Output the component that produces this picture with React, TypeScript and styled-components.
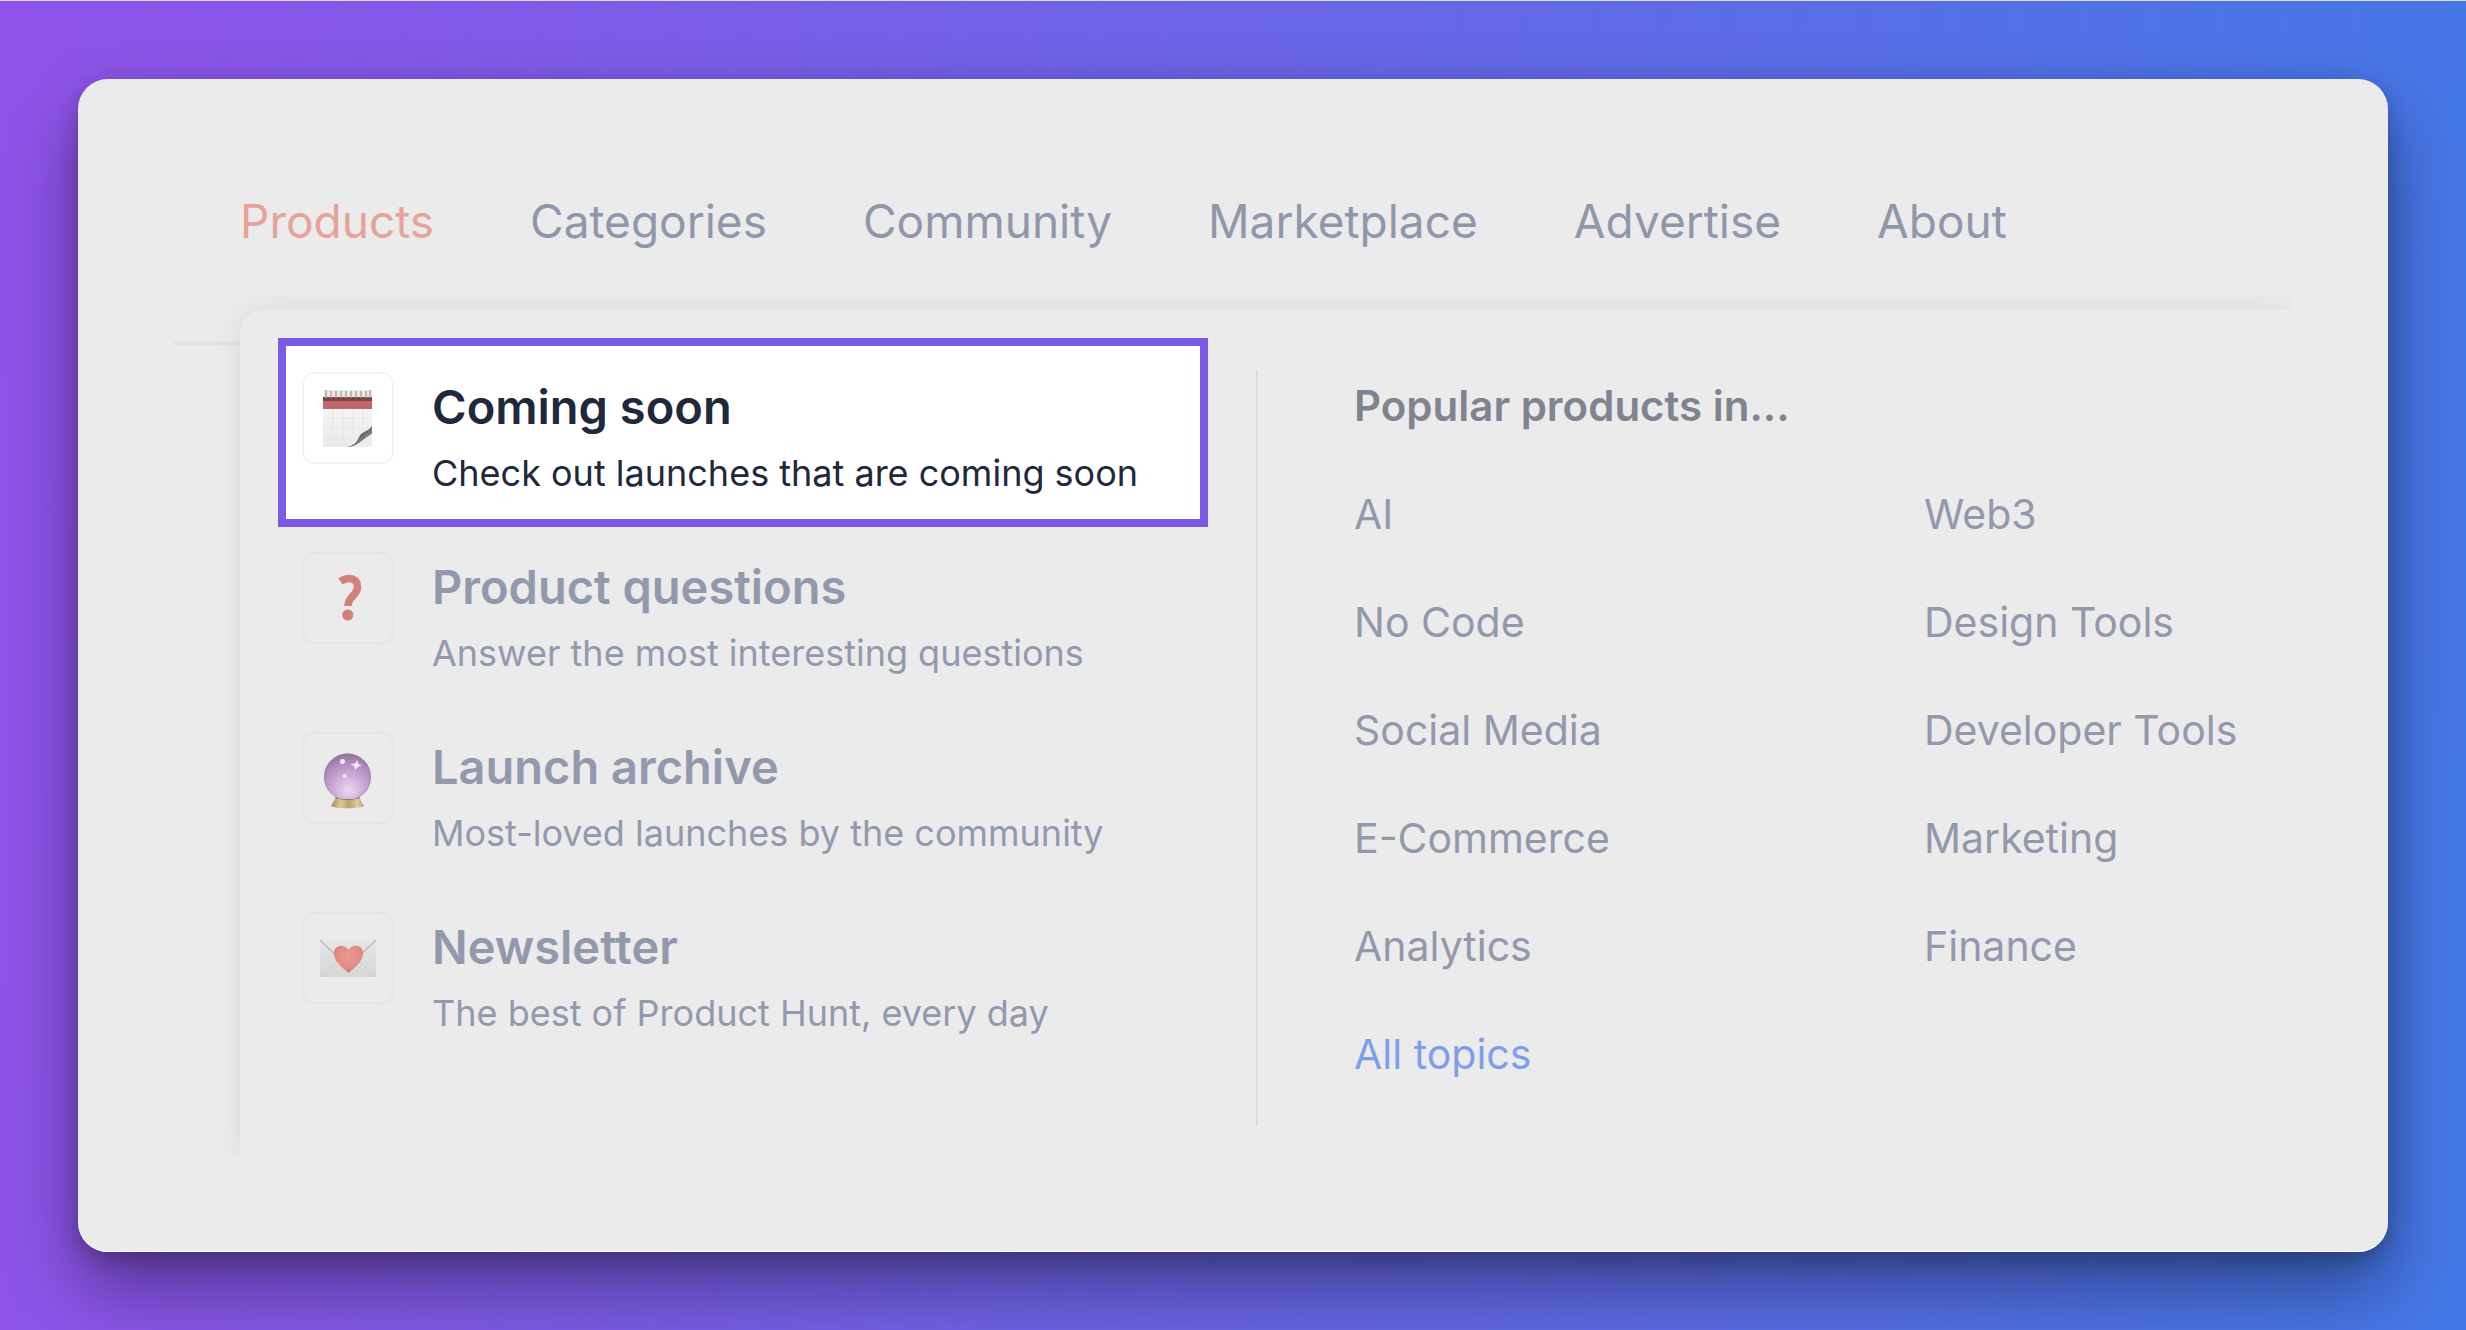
import React from "react";
import styled, { createGlobalStyle } from "styled-components";

const GlobalStyle = createGlobalStyle`
  *, *::before, *::after { box-sizing: border-box; }
  body {
    margin: 0;
    font-family: Inter, "Liberation Sans", sans-serif;
    -webkit-font-smoothing: antialiased;
  }
  a { color: inherit; text-decoration: none; }
  ul { list-style: none; margin: 0; padding: 0; }
`;

const Backdrop = styled.div`
  display: flex;
  min-height: 100vh;
  padding: 78px;
  border-top: 1px solid #dcdcee;
  background: linear-gradient(93deg, #9053e9, #4478e6);
`;

const Card = styled.main`
  flex: 1;
  padding: 96px;
  background: #ebebeb;
  border-radius: 30px;
  box-shadow:
    inset 0 -1px 0 #ffffff,
    0 36px 72px rgba(0, 0, 0, 0.4),
    0 8px 20px rgba(0, 0, 0, 0.2);
`;

const Viewport = styled.div`
  overflow: hidden;
`;

const Header = styled.header`
  height: 170px;
  padding: 10px 66px 0;
  border-bottom: 4px solid #e3e3e3;
`;

const NavList = styled.ul`
  display: flex;
  gap: 96px;
`;

const NavLink = styled.a<{ $active?: boolean }>`
  display: block;
  font-size: 46px;
  line-height: 72px;
  color: ${(p) => (p.$active ? "#e5a399" : "#9197ab")};
`;

const Dropdown = styled.section`
  display: grid;
  grid-template-columns: minmax(0, 1016fr) minmax(0, 1036fr);
  margin: -35px 0 0 66px;
  padding-bottom: 30px;
  background: #ebebeb;
  border-top-left-radius: 24px;
  box-shadow: 0 0 30px rgba(0, 0, 0, 0.07);
`;

const FeatureList = styled.ul`
  display: flex;
  flex-direction: column;
  gap: 7px;
  padding: 36px 56px 0 46px;
`;

const Feature = styled.a<{ $highlighted?: boolean }>`
  display: flex;
  gap: 38px;
  height: 173px;
  padding: 26px 16px 0;
  color: ${(p) => (p.$highlighted ? "#21283c" : "#9399ac")};
  background: ${(p) => (p.$highlighted ? "#ffffff" : "transparent")};
  outline: ${(p) => (p.$highlighted ? "8px solid #7b5ae6" : "none")};
`;

const Tile = styled.span<{ $highlighted?: boolean }>`
  display: flex;
  align-items: center;
  justify-content: center;
  flex: none;
  width: 92px;
  height: 92px;
  border: 2px solid ${(p) => (p.$highlighted ? "#f4f3fd" : "#e5e4ec")};
  border-radius: 12px;
`;

const FeatureText = styled.span`
  display: flex;
  flex-direction: column;
  gap: 12px;
  padding-top: 5px;
  white-space: nowrap;
`;

const FeatureTitle = styled.span`
  font-size: 47px;
  font-weight: 600;
  line-height: 60px;
`;

const FeatureNote = styled.span`
  font-size: 36px;
  line-height: 48px;
`;

const Popular = styled.div`
  margin-top: 60px;
  padding-left: 96px;
  border-left: 2px solid #dcdbe4;
`;

const PopularTitle = styled.h2`
  margin: 0 0 36px;
  font-size: 42px;
  font-weight: 600;
  line-height: 72px;
  color: #80848f;
`;

const TopicGrid = styled.ul`
  display: grid;
  grid-template-columns: 570fr 368fr;
  row-gap: 36px;
  padding-bottom: 36px;
`;

const Topic = styled.a<{ $accent?: boolean }>`
  display: block;
  font-size: 41px;
  line-height: 72px;
  white-space: nowrap;
  color: ${(p) => (p.$accent ? "#7f9eea" : "#9398ab")};
`;

const CalendarIcon = () => (
  <svg width="88" height="88" viewBox="2 2 88 88" aria-hidden="true">
    <defs>
      <linearGradient id="paper" x1="0" y1="0" x2="0" y2="1">
        <stop offset="0" stopColor="#f6f5f5" />
        <stop offset="1" stopColor="#eaeaea" />
      </linearGradient>
      <linearGradient id="curl" x1="0" y1="0" x2="1" y2="1">
        <stop offset="0" stopColor="#c9c9c9" />
        <stop offset="0.45" stopColor="#5d5d5d" />
        <stop offset="1" stopColor="#c4c4c4" />
      </linearGradient>
    </defs>
    <rect x="22" y="18" width="48" height="8" fill="#ece8e8" />
    <path d="M21 36H70V55L55 68L45 75H21Z" fill="url(#paper)" />
    <path d="M21 46H69M21 56H68M21 66H56M31 38V75M41 38V75M51 38V68M61 38V62" stroke="#e6e6e6" strokeWidth="1" />
    <rect x="21" y="26" width="49" height="11" fill="#c0676b" />
    <rect x="21" y="25" width="49" height="4" fill="#7c4447" />
    <path d="M24 18V26M29 19V26M34 19V26M39 19V26M44 19V26M49 19V26M54 19V26M59 19V26M64 19V26M68 18V26" stroke="#a8a2a2" strokeWidth="1.4" />
    <path d="M45 75C52 73 55 70 57 65C60 59 66 60 70 54V62C62 66 58 73 48 75Z" fill="url(#curl)" />
    <path d="M48 75C58 73 62 66 70 62V75Z" fill="#ededed" />
  </svg>
);

const QuestionIcon = () => (
  <svg width="88" height="88" viewBox="2 2 88 88" aria-hidden="true">
    <path
      d="M38.500 29.500C47 23.500 56 27 55.500 35.500C55 44 46 44 46 54"
      fill="none"
      stroke="#d28079"
      strokeWidth="7.5"
    />
    <circle cx="45.800" cy="63" r="5.600" fill="#d28079" />
  </svg>
);

const CrystalBallIcon = () => (
  <svg width="88" height="88" viewBox="2 2 88 88" aria-hidden="true">
    <defs>
      <radialGradient id="ball" cx="0.52" cy="0.78" r="0.85">
        <stop offset="0" stopColor="#ead9f0" />
        <stop offset="0.35" stopColor="#cfaedb" />
        <stop offset="0.7" stopColor="#b08abc" />
        <stop offset="1" stopColor="#806c88" />
      </radialGradient>
      <linearGradient id="stand" x1="0" y1="0" x2="1" y2="0">
        <stop offset="0" stopColor="#a58f62" />
        <stop offset="0.3" stopColor="#dcc990" />
        <stop offset="0.55" stopColor="#b8a172" />
        <stop offset="0.8" stopColor="#dfd19c" />
        <stop offset="1" stopColor="#b39f74" />
      </linearGradient>
    </defs>
    <path d="M34 65H57L62 74C58 77 33 77 29 74Z" fill="url(#stand)" />
    <circle cx="45.500" cy="45" r="23.500" fill="url(#ball)" />
    <circle cx="45.500" cy="45" r="23" fill="none" stroke="#8f7799" strokeOpacity="0.5" />
    <path d="M33 65C40 69 51 69 58 65L57 67H34Z" fill="#8e7868" />
    <circle cx="40.500" cy="29.500" r="2.500" fill="#f5ecf8" />
    <circle cx="42.500" cy="44" r="2" fill="#f0e4f4" />
    <path d="M55 28L56.500 32L60 33L56 35L53 38L52 34L48 32L53 31.500Z" fill="#f3e8f7" />
  </svg>
);

const LoveLetterIcon = () => (
  <svg width="88" height="88" viewBox="2 2 88 88" aria-hidden="true">
    <defs>
      <linearGradient id="envelope" x1="0" y1="0" x2="0" y2="1">
        <stop offset="0" stopColor="#e6e6e6" />
        <stop offset="1" stopColor="#d7d7d7" />
      </linearGradient>
      <radialGradient id="heart" cx="0.5" cy="0.4" r="0.65">
        <stop offset="0" stopColor="#eb9a95" />
        <stop offset="0.65" stopColor="#e48a84" />
        <stop offset="1" stopColor="#c46f69" />
      </radialGradient>
    </defs>
    <rect x="18" y="28" width="56" height="37" fill="url(#envelope)" />
    <path d="M18 65L38 47M74 65L54 47" stroke="#cdcdcd" strokeWidth="1" />
    <path d="M18 28L46 55L74 28" fill="none" stroke="#bcbcbc" strokeWidth="1.5" />
    <path
      d="M46.500 61C41 56 32 50 32 41.500C32 33 42 31 46.500 38C51 31 61 33 61 41.500C61 50 52 56 46.500 61Z"
      fill="url(#heart)"
    />
  </svg>
);

const navItems = ["Products", "Categories", "Community", "Marketplace", "Advertise", "About"];

const features = [
  { title: "Coming soon", note: "Check out launches that are coming soon", icon: <CalendarIcon />, highlighted: true },
  { title: "Product questions", note: "Answer the most interesting questions", icon: <QuestionIcon /> },
  { title: "Launch archive", note: "Most-loved launches by the community", icon: <CrystalBallIcon /> },
  { title: "Newsletter", note: "The best of Product Hunt, every day", icon: <LoveLetterIcon /> },
];

const topics = [
  "AI",
  "Web3",
  "No Code",
  "Design Tools",
  "Social Media",
  "Developer Tools",
  "E-Commerce",
  "Marketing",
  "Analytics",
  "Finance",
  "All topics",
];

export default function App() {
  return (
    <>
      <GlobalStyle />
      <Backdrop>
        <Card>
          <Viewport>
            <Header>
              <nav>
                <NavList>
                  {navItems.map((label) => (
                    <li key={label}>
                      <NavLink href="#" $active={label === "Products"}>
                        {label}
                      </NavLink>
                    </li>
                  ))}
                </NavList>
              </nav>
            </Header>
            <Dropdown>
              <FeatureList>
                {features.map((f) => (
                  <li key={f.title}>
                    <Feature href="#" $highlighted={f.highlighted}>
                      <Tile $highlighted={f.highlighted}>{f.icon}</Tile>
                      <FeatureText>
                        <FeatureTitle>{f.title}</FeatureTitle>
                        <FeatureNote>{f.note}</FeatureNote>
                      </FeatureText>
                    </Feature>
                  </li>
                ))}
              </FeatureList>
              <Popular>
                <PopularTitle>Popular products in...</PopularTitle>
                <TopicGrid>
                  {topics.map((label) => (
                    <li key={label}>
                      <Topic href="#" $accent={label === "All topics"}>
                        {label}
                      </Topic>
                    </li>
                  ))}
                </TopicGrid>
              </Popular>
            </Dropdown>
          </Viewport>
        </Card>
      </Backdrop>
    </>
  );
}
